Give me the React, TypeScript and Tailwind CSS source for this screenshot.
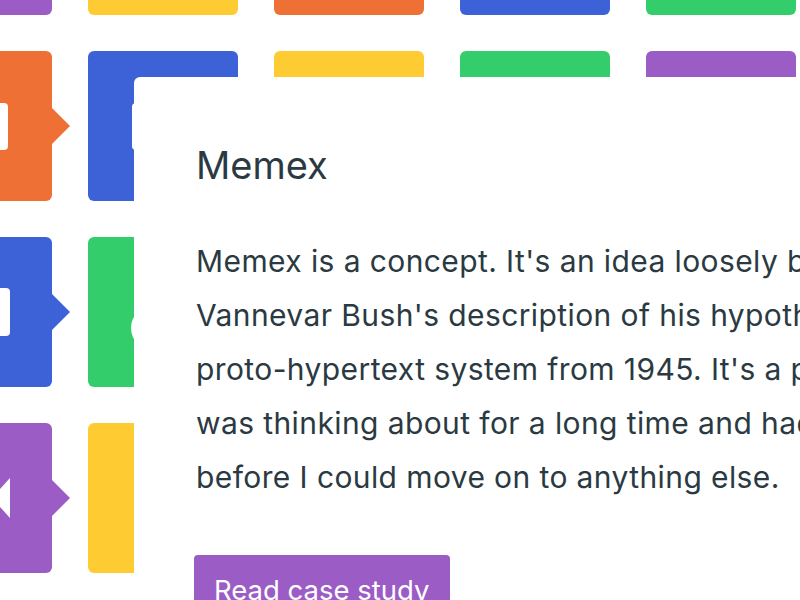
type Hole = 'none' | 'rect' | 'wide' | 'circle' | 'tri'

type TileSpec = { color: string; hole?: Hole }

const tiles: TileSpec[] = [
  { color: 'bg-[#9b5cc6]' },
  { color: 'bg-[#ffcb33]' },
  { color: 'bg-[#ef7035]' },
  { color: 'bg-[#3d62d8]' },
  { color: 'bg-[#33ce6b]' },

  { color: 'bg-[#ef7035]', hole: 'rect' },
  { color: 'bg-[#3d62d8]', hole: 'rect' },
  { color: 'bg-[#ffcb33]' },
  { color: 'bg-[#33ce6b]' },
  { color: 'bg-[#9b5cc6]' },

  { color: 'bg-[#3d62d8]', hole: 'wide' },
  { color: 'bg-[#33ce6b]', hole: 'circle' },
  { color: 'bg-[#ef7035]' },
  { color: 'bg-[#9b5cc6]' },
  { color: 'bg-[#ffcb33]' },

  { color: 'bg-[#9b5cc6]', hole: 'tri' },
  { color: 'bg-[#ffcb33]' },
  { color: 'bg-[#3d62d8]' },
  { color: 'bg-[#ef7035]' },
  { color: 'bg-[#33ce6b]' },
]

const arrowFill: Record<string, string> = {
  'bg-[#9b5cc6]': 'fill-[#9b5cc6]',
  'bg-[#ffcb33]': 'fill-[#ffcb33]',
  'bg-[#ef7035]': 'fill-[#ef7035]',
  'bg-[#3d62d8]': 'fill-[#3d62d8]',
  'bg-[#33ce6b]': 'fill-[#33ce6b]',
}

function Tile({ color, hole = 'none' }: TileSpec) {
  return (
    <div className={`relative flex h-[150px] w-[150px] items-center justify-center rounded-md ${color}`}>
      {/* connector on the right */}
      <svg
        className={`absolute left-full top-[57px] ${arrowFill[color]}`}
        width="18"
        height="36"
        viewBox="0 0 18 36"
      >
        <polygon points="0,0 18,18 0,36" />
      </svg>

      {hole === 'rect' && <div className="h-[47px] w-[62px] rounded-[4px] bg-white" />}
      {hole === 'wide' && <div className="h-[48px] w-[66px] rounded-[4px] bg-white" />}
      {hole === 'circle' && (
        <div className="mr-[20px] mt-[32px] h-[44px] w-[44px] rounded-full bg-white" />
      )}
      {hole === 'tri' && (
        <svg className="ml-[48px] fill-white" width="18" height="40" viewBox="0 0 18 40">
          <polygon points="18,0 18,40 0,20" />
        </svg>
      )}
    </div>
  )
}

export default function App() {
  return (
    <div
      className="relative h-[600px] w-[800px] overflow-hidden bg-white"
      style={{ fontFamily: 'Inter, "Noto Sans", sans-serif' }}
    >
      {/* Background blocks */}
      <div className="-ml-[98px] -mt-[135px] grid grid-cols-[repeat(5,150px)] gap-[36px]">
        {tiles.map((t, i) => (
          <Tile key={i} {...t} />
        ))}
      </div>

      {/* Case study card */}
      <div className="absolute left-[134px] top-[77px] flex h-[600px] w-[800px] flex-col items-start rounded-tl-md bg-white pl-[62px] pt-[64px] text-[#2b3a42]">
        <h1 className="text-[38px] leading-[48px] font-normal">Memex</h1>
        <p className="mt-[45px] whitespace-nowrap text-[30px] leading-[54px] tracking-[0.4px]">
          Memex is a concept. It's an idea loosely based on
          <br />
          Vannevar Bush's description of his hypothetical
          <br />
          proto-hypertext system from 1945. It's a project I
          <br />
          was thinking about for a long time and had to build
          <br />
          before I could move on to anything else.
        </p>
        <button className="-ml-[2px] mt-[51px] rounded-[4px] bg-[#9b5cc6] px-[20px] pb-[8px] pt-[16px] text-[27.5px] leading-[39px] text-white">
          Read case study
        </button>
      </div>
    </div>
  )
}
